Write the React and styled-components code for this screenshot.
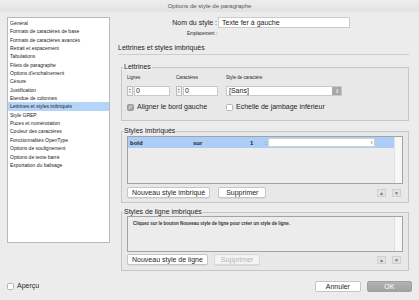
import React from "react"
import styled, { createGlobalStyle } from "styled-components"

const GlobalStyle = createGlobalStyle`
    body {
        margin: 0;
        background: #ececec;
    }
`;

const Window = styled.div`
    width: 419px;
    height: 300px;
    display: flex;
    flex-direction: column;
    background: #ececec;
    font-family: "Liberation Sans", Arial, sans-serif;
    color: #1e1e1e;
    overflow: hidden;
`;

const TitleBar = styled.div`
    height: 12px;
    line-height: 12px;
    text-align: center;
    font-size: 6px;
    color: #555;
    background: linear-gradient(#eeeeee, #e2e2e2);
`;

const Main = styled.div`
    display: flex;
    padding: 5px 0 0 7px;
`;

const NavList = styled.ul`
    margin: 0;
    padding: 1px 0 0;
    list-style: none;
    width: 103px;
    height: 226px;
    box-sizing: border-box;
    background: #fff;
    border: 1px solid #b9b9b9;
    flex-shrink: 0;
`;

const NavItem = styled.li`
    height: 8.35px;
    line-height: 8.35px;
    padding-left: 2px;
    font-size: 5px;
    white-space: nowrap;
    color: #222;
    background: ${props => props.selected ? "#b4d4f8" : "transparent"};
`;

const Panel = styled.div`
    margin-left: 8px;
    width: 291px;
    display: flex;
    flex-direction: column;
`;

const FormRow = styled.div`
    display: flex;
    align-items: center;
    height: ${props => props.h}px;
    margin-top: ${props => props.mt || 0}px;
`;

const RowLabel = styled.div`
    width: 99px;
    padding-right: 1px;
    text-align: right;
    font-size: ${props => props.size}px;
    white-space: nowrap;
`;

const NameInput = styled.div`
    width: 132px;
    height: 11px;
    box-sizing: border-box;
    background: #fff;
    border: 1px solid #cbcbcb;
    font-size: 7px;
    line-height: 9px;
    padding-left: 3px;
`;

const Heading = styled.div`
    margin-top: 7px;
    font-size: 7px;
    line-height: 9px;
`;

const Separator = styled.div`
    margin-top: 2px;
    height: 1px;
    background: #cdcdcd;
`;

const Group = styled.fieldset`
    margin: ${props => props.mt}px 0 0 3px;
    width: 288px;
    box-sizing: border-box;
    border: 1px solid #c6c6c6;
    padding: 0 5px ${props => props.pb}px 5px;
    background: #e8e8e8;
    min-inline-size: 0;
`;

const Legend = styled.legend`
    padding: 0 1px;
    margin-left: -4px;
    font-size: 7px;
    line-height: 8px;
    background: #ececec;
`;

const DropGrid = styled.div`
    display: grid;
    grid-template-columns: 49px 50px 1fr;
    margin-top: 4px;
`;

const SmallLabel = styled.div`
    font-size: 4.5px;
    line-height: 6px;
    margin-bottom: 5px;
`;

const Spinner = styled.div`
    display: flex;
    width: ${props => props.w}px;
    height: 10px;
`;

const Stepper = styled.div`
    width: 6px;
    box-sizing: border-box;
    border: 1px solid #bdbdbd;
    background: #f6f6f6;
    display: flex;
    flex-direction: column;
    align-items: center;
    justify-content: center;
    font-size: 3px;
    line-height: 3.5px;
    color: #555;
`;

const SpinField = styled.div`
    flex: 1;
    margin-left: 1px;
    box-sizing: border-box;
    border: 1px solid #c9c9c9;
    background: #fff;
    font-size: 7px;
    line-height: 8px;
    padding-left: 1px;
`;

const Select = styled.div`
    display: flex;
    width: 116px;
    height: 10px;
    box-sizing: border-box;
    border: 1px solid #c9c9c9;
    background: #fff;
`;

const SelectText = styled.div`
    flex: 1;
    font-size: 7px;
    line-height: 8px;
    padding-left: 2px;
`;

const SelectButton = styled.div`
    width: 9px;
    background: #a7a7a7;
    color: #fff;
    font-size: 5px;
    line-height: 8px;
    text-align: center;
`;

const CheckRow = styled.div`
    display: grid;
    grid-template-columns: 99px 1fr;
    margin-top: 7px;
`;

const Check = styled.label`
    display: flex;
    align-items: center;
    gap: 3px;
    font-size: 7px;
    line-height: 8px;
    white-space: nowrap;
`;

const Box = styled.span`
    width: 7px;
    height: 7px;
    box-sizing: border-box;
    border-radius: 1.5px;
    border: 1px solid ${props => props.checked ? "#9a9a9a" : "#b5b5b5"};
    background: ${props => props.checked ? "#a3a3a3" : "#fff"};
    color: #fff;
    font-size: 6px;
    line-height: 5px;
    text-align: center;
`;

const ListBox = styled.div`
    display: flex;
    height: ${props => props.h}px;
    margin-top: ${props => props.mt}px;
    box-sizing: border-box;
    border: 1px solid #a3a3a3;
    background: #ececec;
`;

const ListRows = styled.div`
    flex: 1;
`;

const ScrollTrack = styled.div`
    width: 7px;
    background: #f7f7f7;
    border-left: 1px solid #e0e0e0;
`;

const NestedRow = styled.div`
    display: grid;
    grid-template-columns: 63px 57px 15px 1fr;
    align-items: center;
    height: 11px;
    padding-left: 2px;
    background: #abcdf6;
    font-size: 6px;
    font-weight: bold;
`;

const NestedField = styled.div`
    display: flex;
    align-items: center;
    height: 9px;
    margin-right: 19px;
    &::before {
        content: ":";
        width: 3px;
        font-weight: normal;
    }
`;

const NestedInput = styled.div`
    flex: 1;
    height: 9px;
    box-sizing: border-box;
    background: #fff;
    border: 1px solid #d2d2d2;
    display: flex;
    justify-content: flex-end;
    align-items: center;
    padding-right: 1px;
    font-size: 4px;
    color: #888;
    font-weight: normal;
`;

const HintText = styled.div`
    padding: 4px 0 0 5px;
    font-size: 4.5px;
    font-weight: bold;
    color: #333;
    white-space: nowrap;
`;

const ButtonRow = styled.div`
    display: flex;
    align-items: center;
    gap: ${props => props.gap}px;
    margin-top: ${props => props.mt}px;
    padding-right: 2px;
`;

const Button = styled.div`
    height: 11px;
    box-sizing: border-box;
    padding: 0 ${props => props.px}px;
    background: ${props => props.disabled ? "#f3f3f3" : "#fff"};
    border: 1px solid ${props => props.disabled ? "#dadada" : "#c6c6c6"};
    border-radius: 2px;
    box-shadow: 0 0.5px 0 rgba(0, 0, 0, 0.12);
    font-size: 7px;
    line-height: 9px;
    color: ${props => props.disabled ? "#b4b4b4" : "#1e1e1e"};
    white-space: nowrap;
`;

const Arrows = styled.div`
    margin-left: auto;
    display: flex;
    gap: 6px;
`;

const ArrowButton = styled.div`
    width: 9px;
    height: 8px;
    box-sizing: border-box;
    border: 1px solid #d0d0d0;
    background: #e2e2e2;
    color: #777;
    font-size: 5px;
    line-height: 6px;
    text-align: center;
`;

const Footer = styled.div`
    display: flex;
    align-items: center;
    margin-top: 9px;
    height: 12px;
    padding: 0 7px;
`;

const FooterButton = styled.div`
    width: 46px;
    height: 11px;
    box-sizing: border-box;
    margin-left: ${props => props.ml}px;
    border-radius: 2px;
    border: 1px solid ${props => props.primary ? "#a0a0a0" : "#c6c6c6"};
    background: ${props => props.primary ? "linear-gradient(#b3b3b3, #a2a2a2)" : "#fff"};
    color: ${props => props.primary ? "#fff" : "#1e1e1e"};
    font-size: 7px;
    line-height: 9px;
    text-align: center;
`;

const navItems = [
    "Général",
    "Formats de caractères de base",
    "Formats de caractères avancés",
    "Retrait et espacement",
    "Tabulations",
    "Filets de paragraphe",
    "Options d'enchaînement",
    "Césure",
    "Justification",
    "Etendue de colonnes",
    "Lettrines et styles imbriqués",
    "Style GREP",
    "Puces et numérotation",
    "Couleur des caractères",
    "Fonctionnalités OpenType",
    "Options de soulignement",
    "Options de texte barré",
    "Exportation du balisage",
];

const NumberSpinner = ({ w }) => (
    <Spinner w={w}>
        <Stepper><span>▴</span><span>▾</span></Stepper>
        <SpinField>0</SpinField>
    </Spinner>
);

const App = () => {
    return (
        <Window>
            <GlobalStyle />
            <TitleBar>Options de style de paragraphe</TitleBar>
            <Main>
                <NavList>
                    {navItems.map(item => (
                        <NavItem key={item} selected={item === "Lettrines et styles imbriqués"}>{item}</NavItem>
                    ))}
                </NavList>
                <Panel>
                    <FormRow h={11}>
                        <RowLabel size={7}>Nom du style :</RowLabel>
                        <NameInput>Texte fer à gauche</NameInput>
                    </FormRow>
                    <FormRow h={6} mt={2}>
                        <RowLabel size={4.5}>Emplacement :</RowLabel>
                    </FormRow>
                    <Heading>Lettrines et styles imbriqués</Heading>
                    <Separator />

                    <Group mt={8} pb={9}>
                        <Legend>Lettrines</Legend>
                        <DropGrid>
                            <div>
                                <SmallLabel>Lignes</SmallLabel>
                                <NumberSpinner w={43} />
                            </div>
                            <div>
                                <SmallLabel>Caractères</SmallLabel>
                                <NumberSpinner w={42} />
                            </div>
                            <div>
                                <SmallLabel>Style de caractère</SmallLabel>
                                <Select>
                                    <SelectText>[Sans]</SelectText>
                                    <SelectButton>⇕</SelectButton>
                                </Select>
                            </div>
                        </DropGrid>
                        <CheckRow>
                            <Check><Box checked>✓</Box>Aligner le bord gauche</Check>
                            <Check><Box />Echelle de jambage inférieur</Check>
                        </CheckRow>
                    </Group>

                    <Group mt={6} pb={4}>
                        <Legend>Styles imbriqués</Legend>
                        <ListBox h={48} mt={1}>
                            <ListRows>
                                <NestedRow>
                                    <span>bold</span>
                                    <span>sur</span>
                                    <span>1</span>
                                    <NestedField>
                                        <NestedInput>⇕</NestedInput>
                                    </NestedField>
                                </NestedRow>
                            </ListRows>
                            <ScrollTrack />
                        </ListBox>
                        <ButtonRow gap={8} mt={3}>
                            <Button px={4}>Nouveau style imbriqué</Button>
                            <Button px={7}>Supprimer</Button>
                            <Arrows>
                                <ArrowButton>▲</ArrowButton>
                                <ArrowButton>▼</ArrowButton>
                            </Arrows>
                        </ButtonRow>
                    </Group>

                    <Group mt={5} pb={5}>
                        <Legend>Styles de ligne imbriqués</Legend>
                        <ListBox h={36} mt={0}>
                            <ListRows>
                                <HintText>Cliquez sur le bouton Nouveau style de ligne pour créer un style de ligne.</HintText>
                            </ListRows>
                            <ScrollTrack />
                        </ListBox>
                        <ButtonRow gap={6} mt={2}>
                            <Button px={4}>Nouveau style de ligne</Button>
                            <Button px={6} disabled>Supprimer</Button>
                            <Arrows>
                                <ArrowButton>▲</ArrowButton>
                                <ArrowButton>▼</ArrowButton>
                            </Arrows>
                        </ButtonRow>
                    </Group>
                </Panel>
            </Main>
            <Footer>
                <Check><Box />Aperçu</Check>
                <FooterButton ml={276}>Annuler</FooterButton>
                <FooterButton ml={6} primary>OK</FooterButton>
            </Footer>
        </Window>
    )
}

export default App;
